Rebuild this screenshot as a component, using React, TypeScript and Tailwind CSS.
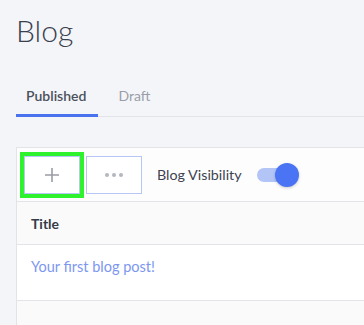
import React, { useState } from 'react';

const font = { fontFamily: 'Lato, "Noto Sans", sans-serif' };

const App: React.FC = () => {
	const [tab, setTab] = useState<'published' | 'draft'>('published');
	const [visible, setVisible] = useState(true);

	return (
		<div className="h-[325px] w-[364px] overflow-hidden bg-[#f4f5f8] pl-4 text-[#3b4150]" style={font}>
			<h1 className="pt-[13px] text-[30px] font-light leading-[34px] text-[#394050]">Blog</h1>

			<div className="mt-[36px] flex border-b border-[#e2e4e9]">
				<button
					className={`-mb-px border-b-[3px] pl-[10px] pr-[12px] pt-[2px] pb-[8px] text-[14px] font-semibold ${tab === 'published' ? 'border-[#4a72ee] text-[#4b505c]' : 'border-transparent text-[#9a9ea8]'}`}
					onClick={() => setTab('published')}
				>
					Published
				</button>
				<button
					className={`-mb-px ml-[10px] border-b-[3px] px-[10px] pt-[2px] pb-[8px] text-[14px] ${tab === 'draft' ? 'border-[#4a72ee] text-[#4b505c]' : 'border-transparent text-[#9a9ea8]'}`}
					onClick={() => setTab('draft')}
				>
					Draft
				</button>
			</div>

			<div className="mt-[30px] w-[400px] border-l border-t border-[#e2e4ea] bg-white">
				<div className="flex h-[54px] items-center border-b border-[#e2e4ea] bg-[#fdfdfe] pl-[7px]">
					<button className="flex h-[38px] w-[56px] items-center justify-center border border-[#b8c6f5] bg-white text-[#9a9da5] outline outline-4 outline-[#2ef22e]">
						<svg width="16" height="16" viewBox="0 0 16 16" fill="none" stroke="currentColor" strokeWidth="1.6">
							<path d="M8 1v14M1 8h14" />
						</svg>
					</button>
					<button className="ml-[6px] flex h-[38px] w-[56px] items-center justify-center gap-[3px] border border-[#b8c6f5] bg-white">
						<span className="h-[4px] w-[4px] rounded-full bg-[#b4b7be]" />
						<span className="h-[4px] w-[4px] rounded-full bg-[#b4b7be]" />
						<span className="h-[4px] w-[4px] rounded-full bg-[#b4b7be]" />
					</button>
					<span className="ml-[15px] text-[14.3px] text-[#3e4350]">Blog Visibility</span>
					<button className="relative ml-[15px] h-[14px] w-[34px] rounded-full bg-[#b3c4f7]" onClick={() => setVisible(v => !v)}>
						<span className={`absolute top-[-5px] h-[24px] w-[24px] rounded-full bg-[#4a74f3] shadow-[0_1px_3px_rgba(0,0,0,0.2)] ${visible ? 'left-[18px]' : 'left-[-4px]'}`} />
					</button>
				</div>
				<div className="flex h-[43px] items-center border-b border-[#e2e4ea] bg-[#fafafb] pl-[14px] text-[14px] font-bold text-[#363b47]">Title</div>
				<div className="h-[56px] border-b border-[#e2e4ea] bg-white pl-[14px] pt-[11px] text-[14.5px] text-[#7c97f1]">Your first blog post!</div>
				<div className="h-[30px] bg-[#fafafb]" />
			</div>
		</div>
	);
};

export default App;
